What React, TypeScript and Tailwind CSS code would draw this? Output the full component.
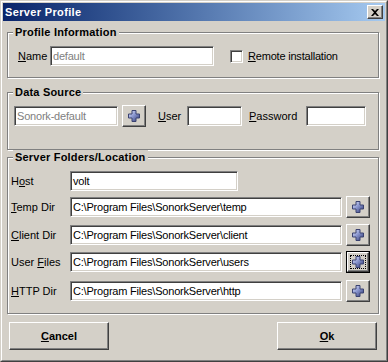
import React from "react";

const FONT = { fontFamily: '"Liberation Sans", Arial, sans-serif' };

function U({ children }: { children: React.ReactNode }) {
  return <span className="underline underline-offset-[1px]">{children}</span>;
}

function Plus() {
  return (
    <svg width="12" height="12" viewBox="0 0 12 12">
      <defs>
        <linearGradient id="pg" x1="0" y1="0" x2="1" y2="1">
          <stop offset="0" stopColor="#e4e8fc" />
          <stop offset="0.45" stopColor="#8c98d0" />
          <stop offset="1" stopColor="#2c3470" />
        </linearGradient>
      </defs>
      <path d="M4 0.5 H8 V4 H11.5 V8 H8 V11.5 H4 V8 H0.5 V4 H4 Z" fill="url(#pg)" stroke="#3a4270" strokeWidth="1" />
    </svg>
  );
}

function Sunken({ w, value, disabled }: { w: string; value?: string; disabled?: boolean }) {
  return (
    <div
      className={`${w} h-[20px] bg-white border border-t-[#808080] border-l-[#808080] border-r-white border-b-white shadow-[inset_1px_1px_0_#404040,inset_-1px_-1px_0_#d4d0c8] flex items-center pl-[2px] text-[11px] tracking-[-0.2px] whitespace-nowrap overflow-hidden ${disabled ? "text-[#808080]" : "text-black"}`}
    >
      {value}
    </div>
  );
}

function PlusBtn({ focused }: { focused?: boolean }) {
  if (focused) {
    return (
      <div className="w-[24px] h-[22px] border border-black flex">
        <div className="flex-1 border border-t-white border-l-white border-r-[#404040] border-b-[#404040] shadow-[inset_-1px_-1px_0_#808080] flex p-[2px]">
          <div className="flex-1 border border-dotted border-black flex items-center justify-center">
            <Plus />
          </div>
        </div>
      </div>
    );
  }
  return (
    <div className="w-[24px] h-[22px] border border-t-white border-l-white border-r-[#404040] border-b-[#404040] shadow-[inset_-1px_-1px_0_#808080] flex items-center justify-center">
      <Plus />
    </div>
  );
}

function Group({ title, h, children, className = "" }: { title: string; h: string; children: React.ReactNode; className?: string }) {
  return (
    <div className={`relative w-[372px] ${h} border border-[#808080] shadow-[inset_1px_1px_0_#fff,1px_1px_0_#fff] ${className}`}>
      <div className="absolute left-[5px] top-[-8px] px-[2px] bg-[#d4d0c8] text-[11px] font-bold leading-[14px] tracking-[0.2px] text-black">
        {title}
      </div>
      {children}
    </div>
  );
}

function FolderRow({ label, value, mt, focused }: { label: React.ReactNode; value: string; mt: string; focused?: boolean }) {
  return (
    <div className={`flex items-center h-[22px] ${mt}`}>
      <div className="w-[59px] text-[11px] text-black">{label}</div>
      <Sunken w="w-[272px]" value={value} />
      <div className="ml-[4px]">
        <PlusBtn focused={focused} />
      </div>
    </div>
  );
}

export default function App() {
  return (
    <div style={FONT} className="w-[388px] h-[362px] bg-[#d4d0c8] border border-t-[#d4d0c8] border-l-[#d4d0c8] border-r-[#404040] border-b-[#404040] text-black">
      <div className="w-full h-full border border-t-white border-l-white border-r-[#808080] border-b-[#808080] p-[1px] flex flex-col">
        {/* Title bar */}
        <div className="h-[18px] bg-gradient-to-r from-[#0a246a] to-[#a6caf0] flex items-center justify-between pl-[2px] pr-[2px] shrink-0">
          <span className="text-white font-bold text-[11px] tracking-[0.35px]">Server Profile</span>
          <div className="w-[16px] h-[14px] bg-[#d4d0c8] border border-t-white border-l-white border-r-[#404040] border-b-[#404040] shadow-[inset_-1px_-1px_0_#808080] flex items-center justify-center">
            <svg width="8" height="7" viewBox="0 0 8 7">
              <path d="M0 0 L2 0 L4 2 L6 0 L8 0 L5 3.5 L8 7 L6 7 L4 5 L2 7 L0 7 L3 3.5 Z" fill="#000" />
            </svg>
          </div>
        </div>

        <div className="pl-[4px] flex flex-col">
          {/* Profile Information */}
          <Group title="Profile Information" h="h-[46px]" className="mt-[11px]">
            <div className="flex items-center pl-[10px] pt-[13px] text-[11px]">
              <div className="w-[32px]"><U>N</U>ame</div>
              <Sunken w="w-[164px]" value="default" disabled />
              <div className="ml-[16px] w-[13px] h-[13px] bg-white border border-t-[#808080] border-l-[#808080] border-r-white border-b-white shadow-[inset_1px_1px_0_#404040,inset_-1px_-1px_0_#d4d0c8]" />
              <div className="ml-[5px] tracking-[-0.2px]"><U>R</U>emote installation</div>
            </div>
          </Group>

          {/* Data Source */}
          <Group title="Data Source" h="h-[58px]" className="mt-[14px]">
            <div className="flex items-center pl-[6px] pt-[12px] text-[11px]">
              <Sunken w="w-[104px]" value="Sonork-default" disabled />
              <div className="ml-[4px]"><PlusBtn /></div>
              <div className="ml-[12px] w-[29px]"><U>U</U>ser</div>
              <Sunken w="w-[55px]" />
              <div className="ml-[7px] w-[57px]"><U>P</U>assword</div>
              <Sunken w="w-[60px]" />
            </div>
          </Group>

          {/* Server Folders/Location */}
          <Group title="Server Folders/Location" h="h-[157px]" className="mt-[7px]">
            <div className="flex flex-col pl-[3px] pt-[12px]">
              <div className="flex items-center h-[22px]">
                <div className="w-[59px] text-[11px]">H<U>o</U>st</div>
                <Sunken w="w-[168px]" value="volt" />
              </div>
              <FolderRow mt="mt-[4px]" label={<><U>T</U>emp Dir</>} value="C:\Program Files\SonorkServer\temp" />
              <FolderRow mt="mt-[6px]" label={<><U>C</U>lient Dir</>} value="C:\Program Files\SonorkServer\client" />
              <FolderRow mt="mt-[5px]" label={<>User <U>F</U>iles</>} value="C:\Program Files\SonorkServer\users" focused />
              <FolderRow mt="mt-[7px]" label={<><U>H</U>TTP Dir</>} value="C:\Program Files\SonorkServer\http" />
            </div>
          </Group>

          {/* Buttons */}
          <div className="flex mt-[8px] pl-[2px]">
            <div className="w-[100px] h-[28px] border border-t-white border-l-white border-r-[#404040] border-b-[#404040] shadow-[inset_-1px_-1px_0_#808080] flex items-center justify-center text-[11px] font-bold">
              <span><U>C</U>ancel</span>
            </div>
            <div className="ml-[168px] w-[100px] h-[28px] border border-t-white border-l-white border-r-[#404040] border-b-[#404040] shadow-[inset_-1px_-1px_0_#808080] flex items-center justify-center text-[11px] font-bold">
              <span><U>O</U>k</span>
            </div>
          </div>
        </div>
      </div>
    </div>
  );
}
